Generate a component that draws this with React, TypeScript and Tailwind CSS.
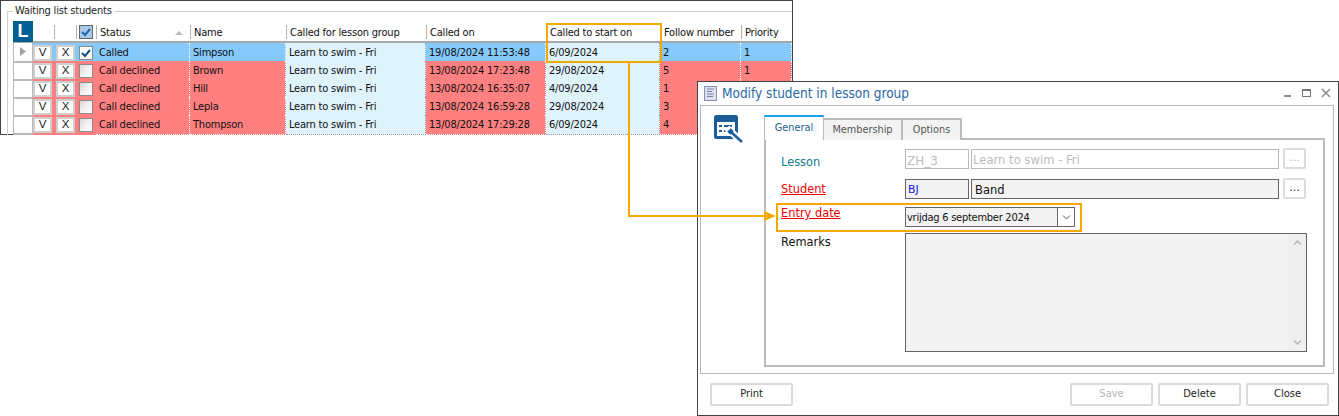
const ORANGE = "#f5a800";

function Check({ on, header }: { on?: boolean; header?: boolean }) {
  return (
    <svg width="14" height="14" viewBox="0 0 14 14" className="block">
      <defs>
        <linearGradient id="cbg" x1="0" y1="0" x2="1" y2="1">
          <stop offset="0" stopColor="#d4d4d4" />
          <stop offset="0.5" stopColor="#f2f2f2" />
          <stop offset="1" stopColor="#ffffff" />
        </linearGradient>
      </defs>
      <rect x="0.5" y="0.5" width="13" height="13" fill={on ? (header ? "#a9c8e4" : "#ffffff") : "url(#cbg)"} stroke={header ? "#666" : "#8a8a8a"} />
      {on && <path d="M3 7l3 3 5-6" fill="none" stroke={header ? "#1c69ad" : "#10528e"} strokeWidth="2" />}
    </svg>
  );
}

const rows = [
  { s: "Called", n: "Simpson", on: "19/08/2024 11:53:48", st: "6/09/2024", f: "2", p: "1", sel: true },
  { s: "Call declined", n: "Brown", on: "13/08/2024 17:23:48", st: "29/08/2024", f: "5", p: "1" },
  { s: "Call declined", n: "Hill", on: "13/08/2024 16:35:07", st: "4/09/2024", f: "1", p: "" },
  { s: "Call declined", n: "Lepla", on: "13/08/2024 16:59:28", st: "29/08/2024", f: "3", p: "" },
  { s: "Call declined", n: "Thompson", on: "13/08/2024 17:29:28", st: "6/09/2024", f: "4", p: "" },
];

const COLS = "grid grid-cols-[20px_21px_22px_20px_94px_96px_140px_120px_114px_81px_51px] whitespace-nowrap";

function HeadCell({ children, sep = true }: { children?: React.ReactNode; sep?: boolean }) {
  return (
    <div className="relative flex items-center pl-[4px] pt-[4px] text-[11px] tracking-[-0.2px] text-[#111]">
      {sep && <span className="absolute left-0 top-[4px] bottom-[3px] w-px bg-[#b4b4b4]" />}
      {children}
    </div>
  );
}

function Cell({ children, bg, light }: { children?: React.ReactNode; bg: string; light?: boolean }) {
  return (
    <div className={`flex items-center pl-[3px] pt-[2px] border-r border-b border-dotted text-[11px] tracking-[-0.2px] text-[#111] ${light ? "border-r-[#9a9a9a] border-b-[#9a9a9a]" : "border-r-white border-b-white"} ${bg}`}>
      {children}
    </div>
  );
}

function Small({ t }: { t: string }) {
  return (
    <div className="w-[19px] h-[16px] bg-white border-2 border-[#cfcfcf] flex items-center justify-center font-['Liberation_Sans',sans-serif] text-[11.5px] text-[#222]">{t}</div>
  );
}

function WaitingList() {
  return (
    <div className="absolute left-0 top-0 w-[793px] h-[135px] bg-white border border-[#444] pl-[6px] pt-[10px] font-['DejaVu_Sans_Condensed','DejaVu_Sans',sans-serif]">
      <div className="relative w-[785px] h-[124px] border-t border-l border-[#d0d0d0] pl-[5px] pt-[10px]">
        <span className="absolute left-[5px] top-[-8px] bg-white px-[2px] text-[11px] tracking-[-0.2px] leading-[14px] text-[#222]">Waiting list students</span>
        <div className={`${COLS} h-[22px] border-b-2 border-[#a8a8a8] mt-[-1px]`}>
          <div className="bg-[#005e94] text-white font-['Liberation_Sans',sans-serif] font-bold text-[18px] leading-[20px] flex items-center justify-center">L</div>
          <HeadCell sep={false} />
          <HeadCell />
          <HeadCell>
            <span className="-ml-px -mt-[2px]"><Check on header /></span>
          </HeadCell>
          <HeadCell>
            <span className="flex-1">Status</span>
            <svg width="8" height="4" viewBox="0 0 8 4" className="mr-[7px]"><path d="M0 4L4 0l4 4z" fill="#bbb" /></svg>
          </HeadCell>
          <HeadCell>Name</HeadCell>
          <HeadCell>Called for lesson group</HeadCell>
          <HeadCell>Called on</HeadCell>
          <HeadCell>Called to start on</HeadCell>
          <HeadCell>Follow number</HeadCell>
          <HeadCell>Priority</HeadCell>
        </div>
        {rows.map((r) => {
          const c = r.sel ? "bg-[#86c9fb]" : "bg-[#ff8080]";
          const l = "bg-[#dff3fd]";
          return (
            <div key={r.n} className={`${COLS} h-[18px]`}>
              <div className="flex items-center justify-center border-b-2 border-r border-l border-[#b8b8b8]">
                {r.sel && <svg width="6" height="9" viewBox="0 0 6 9"><path d="M0 0l6 4.5-6 4.5z" fill="#a0a0a0" /></svg>}
              </div>
              <div className={`flex items-center ${c}`}><Small t="V" /></div>
              <div className={`flex items-center pl-[2px] ${c}`}><Small t="X" /></div>
              <div className={`flex items-center pl-[3px] ${c}`}><Check on={r.sel} /></div>
              <Cell bg={c}>{r.s}</Cell>
              <Cell bg={c}>{r.n}</Cell>
              <Cell bg={l} light>Learn to swim - Fri</Cell>
              <Cell bg={c}>{r.on}</Cell>
              <Cell bg={l} light>{r.st}</Cell>
              <Cell bg={c}>{r.f}</Cell>
              <Cell bg={c}>{r.p}</Cell>
            </div>
          );
        })}
      </div>
    </div>
  );
}

function DotsBtn({ off }: { off?: boolean }) {
  return (
    <div className={`w-[23px] h-[21px] ml-[4px] mt-[-1px] bg-white border-2 border-[#dcdcdc] rounded-[2px] flex items-center justify-center text-[11px] ${off ? "text-[#bbb]" : "text-[#222]"}`}>...</div>
  );
}

function Btn({ t, off }: { t: string; off?: boolean }) {
  return (
    <div className={`w-[83px] h-[23px] bg-white border-2 border-[#dadada] rounded-[2px] flex items-center justify-center text-[11px] ${off ? "text-[#b5b5b5]" : "text-[#222]"}`}>{t}</div>
  );
}

function Dialog() {
  return (
    <div className="absolute left-[697px] top-[81px] w-[642px] h-[335px] bg-white border border-[#444] flex flex-col font-['DejaVu_Sans_Condensed','DejaVu_Sans',sans-serif]">
      <div className="h-[23px] flex items-center pl-[6px] pr-[7px]">
        <svg width="13" height="15" viewBox="0 0 13 15" className="mr-[5px]">
          <rect x="0.5" y="0.5" width="12" height="14" fill="#dfe0ee" stroke="#8c8fb8" />
          <path d="M3 3h7M3 5.5h5M3 8h7M3 10.5h6" stroke="#8083a8" />
        </svg>
        <span className="flex-1 text-[13.5px] text-[#2869a6]">Modify student in lesson group</span>
        <svg width="47" height="12" viewBox="0 0 47 12">
          <rect x="0" y="7" width="7" height="2" fill="#8a8a8a" />
          <rect x="18.5" y="1.5" width="8" height="7" fill="none" stroke="#777" />
          <rect x="18" y="1" width="9" height="2" fill="#777" />
          <path d="M38 1l8 8M46 1l-8 8" stroke="#888" strokeWidth="1.5" fill="none" />
        </svg>
      </div>
      <div className="mx-[2px] h-[269px] w-[634px] border border-[#b9b9b9] flex">
        <div className="w-[63px] pl-[13px] pt-[9px] shrink-0">
          <svg width="29" height="29" viewBox="0 0 29 29">
            <rect x="0" y="0" width="24" height="24" rx="2.5" fill="#1a5d9a" />
            <rect x="3" y="7" width="18" height="14" fill="#ffffff" />
            <rect x="5" y="10" width="3" height="2" fill="#1a5d9a" />
            <rect x="10" y="10" width="8" height="2" fill="#1a5d9a" />
            <rect x="5" y="15" width="3" height="2" fill="#1a5d9a" />
            <rect x="10" y="15" width="3" height="2" fill="#1a5d9a" />
            <path d="M13 13l14 13" stroke="#ffffff" strokeWidth="7" fill="none" />
            <path d="M15 15l3 3" stroke="#1a5d9a" strokeWidth="5" fill="none" />
            <path d="M17 17l11 10" stroke="#1a5d9a" strokeWidth="2.5" fill="none" />
          </svg>
        </div>
        <div className="flex-1 pt-[9px] flex flex-col">
          <div className="flex h-[25px] items-end relative z-10 mb-[-2px]">
            <div className="w-[60px] h-[25px] bg-white border-t-2 border-t-[#1ea0e6] border-r border-l border-[#bbb] flex items-center justify-center text-[#1c5f86] text-[10.8px]">General</div>
            <div className="w-[79px] h-[22px] bg-[#f3f3f3] border-2 border-b-0 border-l-0 border-[#bbb] flex items-center justify-center text-[#555] text-[10.8px]">Membership</div>
            <div className="w-[59px] h-[22px] bg-[#f3f3f3] border-2 border-b-0 border-l-0 border-[#bbb] flex items-center justify-center text-[#555] text-[10.8px]">Options</div>
          </div>
          <div className="w-[561px] h-[229px] border-2 border-[#bbb] pt-[9px] pl-[15px] text-[11.4px] font-['DejaVu_Sans',sans-serif]">
            <div className="flex h-[20px]">
              <span className="w-[124px] pt-[5px] text-[#0f7d8c]">Lesson</span>
              <div className="w-[64px] border border-[#b8b8b8] pl-[1px] pt-[3px] flex items-center text-[#bbb] text-[12px]">ZH_3</div>
              <div className="w-[308px] ml-[2px] border border-[#b8b8b8] pl-[1px] pt-[3px] flex items-center text-[#bbb] text-[11.6px]">Learn to swim - Fri</div>
              <DotsBtn off />
            </div>
            <div className="flex h-[20px] mt-[10px]">
              <span className="w-[124px] pt-[2px] text-[#f00000] underline">Student</span>
              <div className="w-[64px] bg-[#f3f3f3] border border-[#666] pl-[2px] pt-[3px] flex items-center text-[#1a1ae0] text-[11px]">BJ</div>
              <div className="w-[308px] ml-[2px] bg-[#f3f3f3] border border-[#666] pl-[3px] pt-[3px] flex items-center text-[#111] text-[11.5px]">Band</div>
              <DotsBtn />
            </div>
            <div className="flex h-[20px] mt-[8px]">
              <span className="w-[124px] mt-[-3px] pt-[1px] text-[#f00000] underline">Entry date</span>
              <div className="w-[170px] bg-[#f3f3f3] border border-[#666] flex items-center font-['DejaVu_Sans_Condensed',sans-serif] text-[11px] tracking-[-0.25px] text-[#111]">
                <span className="flex-1 pl-[1px] pt-[3px]">vrijdag 6 september 2024</span>
                <span className="w-[17px] h-full bg-white border-l border-[#666] flex items-center justify-center">
                  <svg width="9" height="5" viewBox="0 0 9 5"><path d="M1 0.5l3.5 3.5L8 0.5" fill="none" stroke="#555" /></svg>
                </span>
              </div>
            </div>
            <div className="flex h-[119px] mt-[6px]">
              <span className="w-[124px] pt-px text-[#111]">Remarks</span>
              <div className="w-[402px] bg-[#f3f3f3] border border-[#666] flex justify-end">
                <div className="w-[18px] bg-[#efefef] flex flex-col items-center justify-between py-[6px]">
                  <svg width="9" height="5" viewBox="0 0 9 5"><path d="M1 4.5l3.5-3.5L8 4.5" fill="none" stroke="#b5b5b5" strokeWidth="1.5" /></svg>
                  <svg width="9" height="5" viewBox="0 0 9 5"><path d="M1 0.5l3.5 3.5L8 0.5" fill="none" stroke="#b5b5b5" strokeWidth="1.5" /></svg>
                </div>
              </div>
            </div>
          </div>
        </div>
      </div>
      <div className="flex flex-1 items-center pl-[12px] pr-[9px] gap-[5px]">
        <Btn t="Print" />
        <span className="flex-1" />
        <Btn t="Save" off />
        <Btn t="Delete" />
        <Btn t="Close" />
      </div>
    </div>
  );
}

export default function App() {
  return (
    <div className="relative w-[1339px] h-[416px] bg-white overflow-hidden">
      <WaitingList />
      <Dialog />
      {/* Callout overlay */}
      <div className="absolute left-[546px] top-[23px] w-[116px] h-[40px] border-2 border-[#f5a800]" />
      <div className="absolute left-[776px] top-[203px] w-[306px] h-[29px] border-2 border-[#f5a800]" />
      <svg width="1339" height="416" viewBox="0 0 1339 416" className="absolute left-0 top-0 pointer-events-none">
        <path d="M629 62V216H766" fill="none" stroke={ORANGE} strokeWidth="2" />
        <path d="M764 211l12 5-12 5z" fill={ORANGE} />
      </svg>
    </div>
  );
}
